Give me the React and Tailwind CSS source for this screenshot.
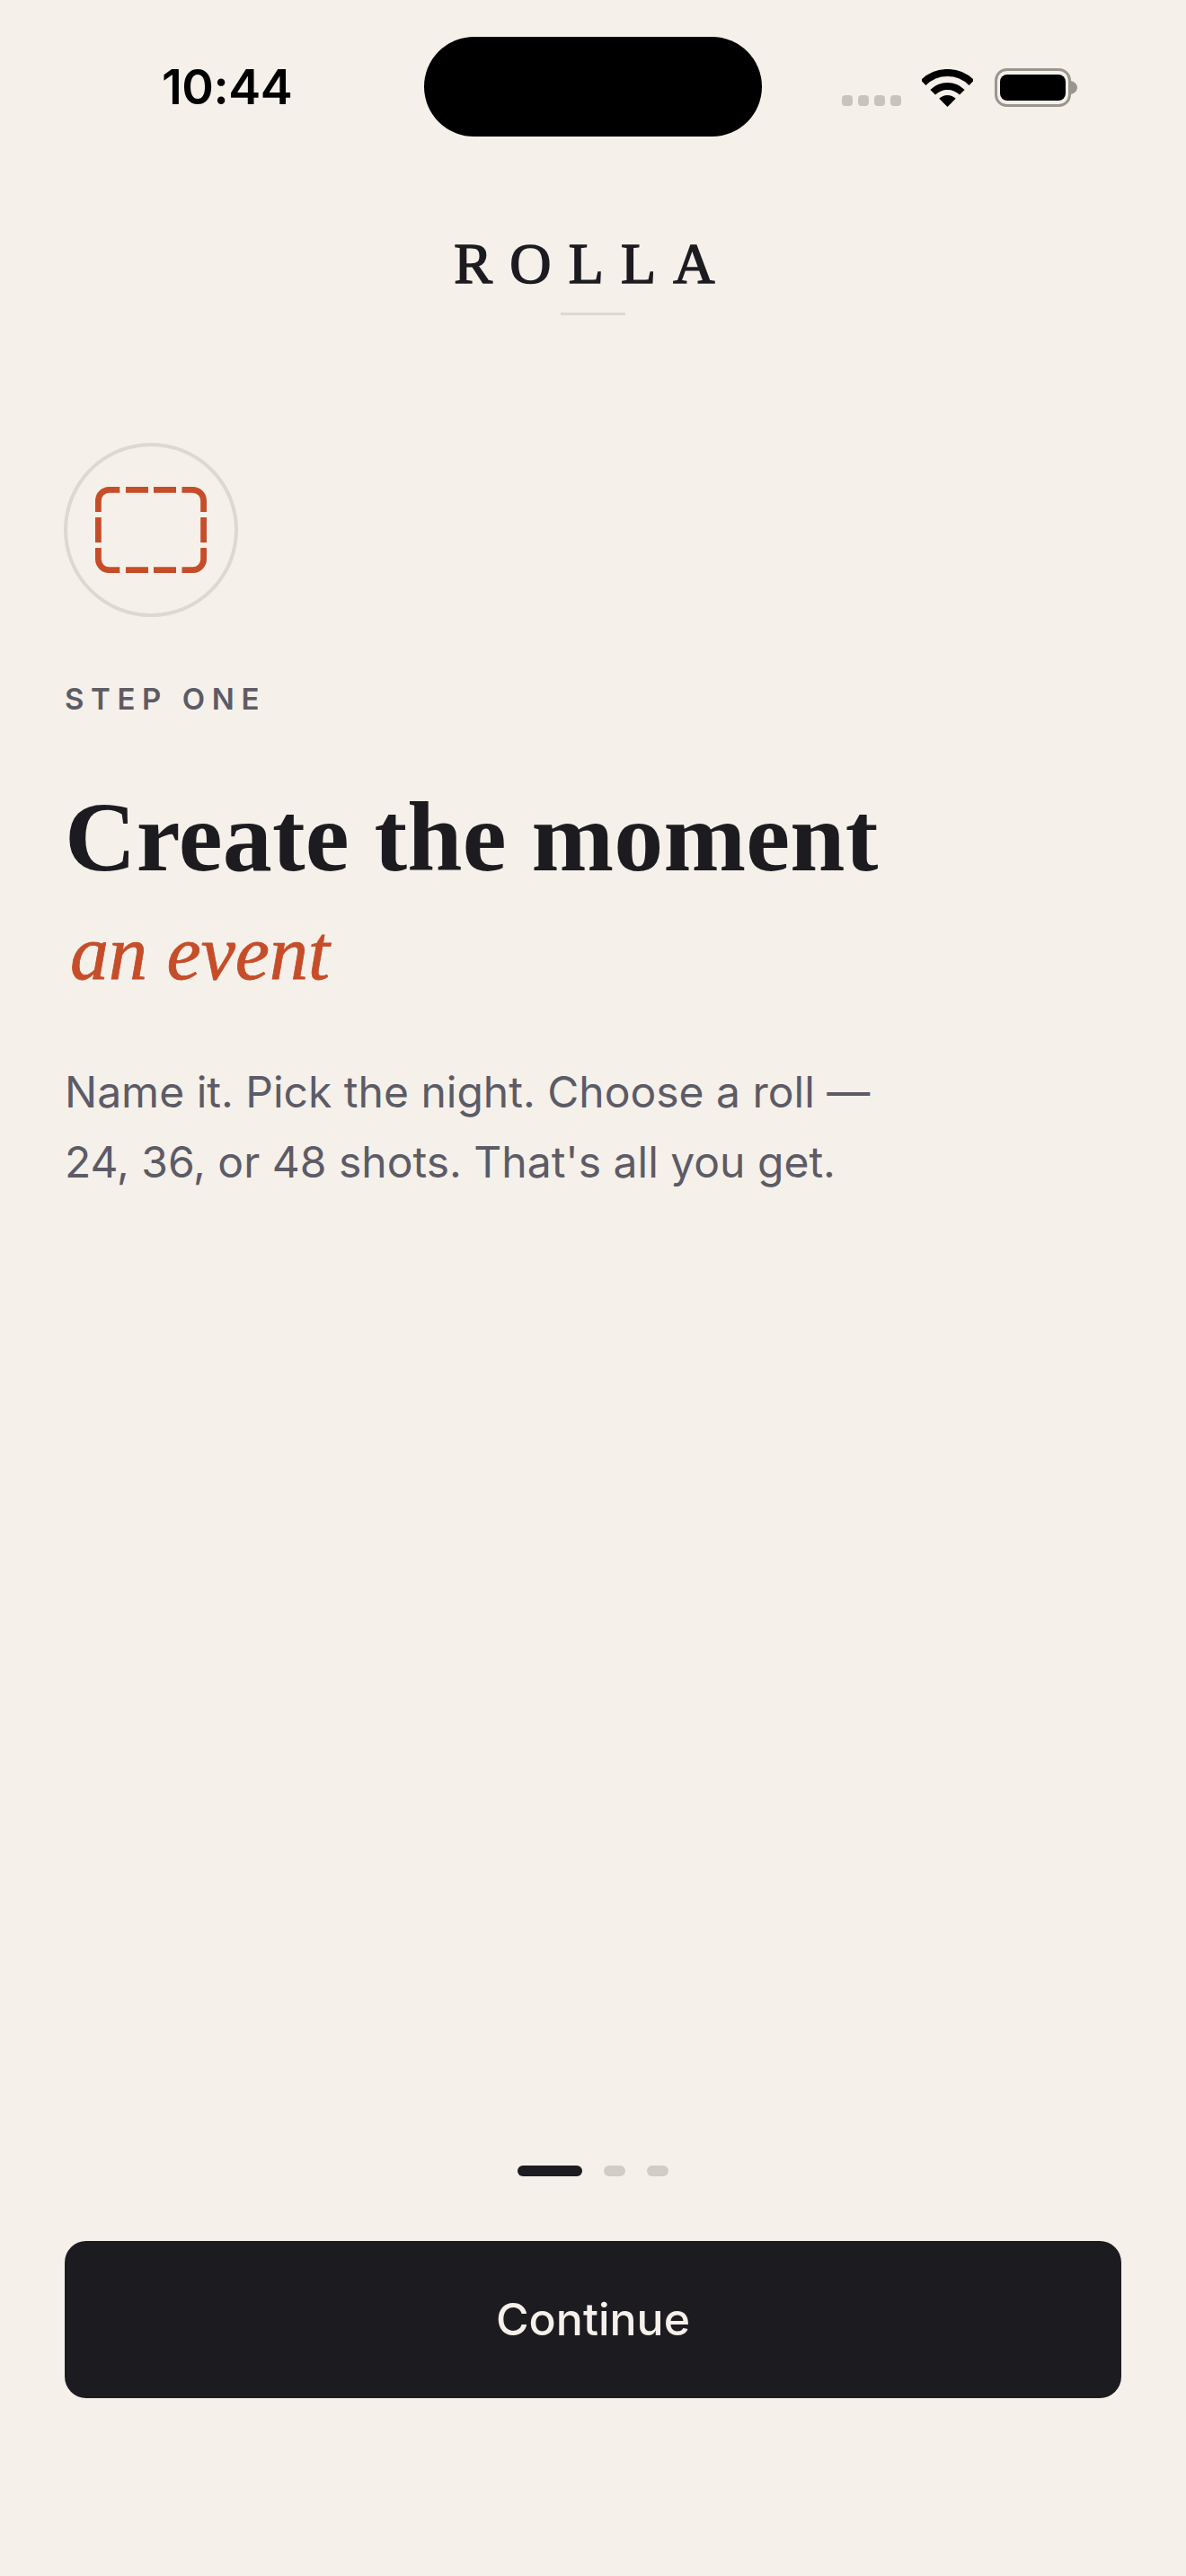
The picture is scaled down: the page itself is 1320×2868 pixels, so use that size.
const inter = "font-['Inter',sans-serif]"
const serif = "font-['Liberation_Serif',serif]"

function StatusBar() {
  return (
    <div className="flex items-center h-[111px] mt-[41px] pl-[180px]">
      <span className={`${inter} w-[292px] text-[54px] leading-none font-semibold text-black tracking-[-0.5px]`}>10:44</span>
      <div className="w-[376px] h-[111px] rounded-full bg-black" />
      <div className="flex items-end ml-[89px] h-[44px]">
        <div className="flex gap-[6px] mb-[1px]">
          <span className="w-[12px] h-[12px] rounded-[4px] bg-[#c8c3bc]" />
          <span className="w-[12px] h-[12px] rounded-[4px] bg-[#c8c3bc]" />
          <span className="w-[12px] h-[12px] rounded-[4px] bg-[#c8c3bc]" />
          <span className="w-[12px] h-[12px] rounded-[4px] bg-[#c8c3bc]" />
        </div>
        <svg className="ml-[23px]" width="57" height="42" viewBox="0 0 57 42">
          <path d="M1.6 15.1 A38 38 0 0 1 55.4 15.1" fill="none" stroke="#000" strokeWidth="8" />
          <path d="M12.2 25.7 A23 23 0 0 1 44.8 25.7" fill="none" stroke="#000" strokeWidth="8" />
          <path d="M28.5 42 L19.3 32.8 A13 13 0 0 1 37.7 32.8 Z" fill="#000" />
        </svg>
        <svg className="ml-[24px]" width="92" height="43" viewBox="0 0 92 43">
          <rect x="1.5" y="1.5" width="82" height="40" rx="12" fill="none" stroke="#9a958e" strokeWidth="3" />
          <rect x="6" y="7" width="73" height="29" rx="8" fill="#000" />
          <path d="M85 14 C89 15 92 18 92 21.5 C92 25 89 28 85 29 Z" fill="#9a958e" />
        </svg>
      </div>
    </div>
  )
}

export default function App() {
  return (
    <div className="flex flex-col w-[1320px] h-[2868px] bg-[#f5f0ea]">
      <StatusBar />

      <header className="flex flex-col items-center mt-[112px]">
        <h2 className={`${serif} text-[64px] leading-[60px] font-normal [-webkit-text-stroke:1.6px_#1c1c20] text-[#1c1c20] tracking-[0.3em]`}>ROLLA</h2>
        <div className="w-[72px] h-[3px] mt-[24px] bg-[#dcd8d2]" />
      </header>

      <main className="flex flex-col items-start px-[72px] mt-[142px]">
        <div className="flex items-center justify-center w-[194px] h-[194px] -ml-[1px] rounded-full border-[4px] border-[#dcd8d2]">
          <svg width="124" height="96" viewBox="0 0 124 96">
            <path
              d="M3.4 28 V15.4 A12 12 0 0 1 15.4 3.4 H27.3 M34 3.4 H59 M65 3.4 H90 M96.5 3.4 H108.6 A12 12 0 0 1 120.6 15.4 V28 M120.6 34 V62 M120.6 68 V80.6 A12 12 0 0 1 108.6 92.6 H96.5 M90 92.6 H65 M59 92.6 H34 M27.3 92.6 H15.4 A12 12 0 0 1 3.4 80.6 V68 M3.4 62 V34"
              fill="none"
              stroke="#c64d29"
              strokeWidth="6.8"
            />
          </svg>
        </div>
        <p className={`${inter} mt-[71px] text-[33px] leading-[40px] font-semibold tracking-[0.23em] text-[#5c5b66]`}>STEP ONE</p>
        <h1 className={`${serif} mt-[74px] text-[110px] leading-[120px] font-bold tracking-[0.2px] text-[#1c1c20]`}>Create the moment</h1>
        <p className={`${serif} mt-[19px] text-[86px] leading-[100px] italic [-webkit-text-stroke:0.8px_#c64d29] text-[#c64d29] pl-[6px]`}>an event</p>
        <p className={`${inter} mt-[66px] w-[960px] text-[48px] leading-[78px] text-[#5c5b66]`}>
          Name it. Pick the night. Choose a roll —<br />24, 36, or 48 shots. That's all you get.
        </p>
      </main>

      <footer className="flex flex-col items-center mt-auto px-[72px] pb-[198px]">
        <div className="flex gap-[24px] mb-[72px]">
          <span className="w-[72px] h-[12px] rounded-full bg-[#1c1c20]" />
          <span className="w-[24px] h-[12px] rounded-full bg-[#d0ccc6]" />
          <span className="w-[24px] h-[12px] rounded-full bg-[#d0ccc6]" />
        </div>
        <button className={`${inter} w-full h-[175px] rounded-[24px] bg-[#1c1c20] text-[50px] font-medium text-[#f5f0ea]`}>Continue</button>
      </footer>
    </div>
  )
}
